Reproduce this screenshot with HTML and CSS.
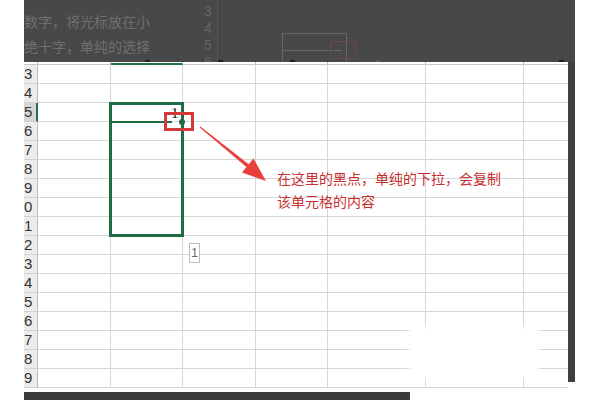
FILE: index.html
```html
<!DOCTYPE html>
<html>
<head>
<meta charset="utf-8">
<link rel="stylesheet" href="styles.css">
</head>
<body>
<div class="page">
  <div class="gutter"></div>
  <div class="main">
    <div class="ghost">
      <div class="ghost-text">数字，将光标放在小<br>绝十字，单纯的选择</div>
      <span class="gnum n3">3</span>
      <span class="gnum n4">4</span>
      <span class="gnum n5">5</span>
      <span class="gnum n6">6</span>
      <span class="gline"></span>
      <span class="grect"></span>
      <span class="grect-line"></span>
      <span class="gred"></span>
      <span class="mark m1"></span>
      <span class="mark m2"></span>
      <span class="mark m3"></span>
      <span class="mark m4"></span>
      <span class="mark m5"></span>
    </div>
    <div class="middle">
      <div class="sheet">
        <div class="hdr">
          <div class="hc"></div><div class="hc"></div><div class="hc sel"></div><div class="hc"></div><div class="hc"></div><div class="hc"></div><div class="hc"></div><div class="hc last"></div>
        </div>
        <div class="row"><div class="rh">3</div><div class="c"></div><div class="c"></div><div class="c"></div><div class="c"></div><div class="c"></div><div class="c"></div><div class="c last"></div></div>
        <div class="row"><div class="rh">4</div><div class="c"></div><div class="c"></div><div class="c"></div><div class="c"></div><div class="c"></div><div class="c"></div><div class="c last"></div></div>
        <div class="row"><div class="rh active">5</div><div class="c"></div><div class="c"></div><div class="c"></div><div class="c"></div><div class="c"></div><div class="c"></div><div class="c last"></div></div>
        <div class="row"><div class="rh">6</div><div class="c"></div><div class="c"></div><div class="c"></div><div class="c"></div><div class="c"></div><div class="c"></div><div class="c last"></div></div>
        <div class="row"><div class="rh">7</div><div class="c"></div><div class="c"></div><div class="c"></div><div class="c"></div><div class="c"></div><div class="c"></div><div class="c last"></div></div>
        <div class="row"><div class="rh">8</div><div class="c"></div><div class="c"></div><div class="c"></div><div class="c"></div><div class="c"></div><div class="c"></div><div class="c last"></div></div>
        <div class="row"><div class="rh">9</div><div class="c"></div><div class="c"></div><div class="c"></div><div class="c"></div><div class="c"></div><div class="c"></div><div class="c last"></div></div>
        <div class="row"><div class="rh">0</div><div class="c"></div><div class="c"></div><div class="c"></div><div class="c"></div><div class="c"></div><div class="c"></div><div class="c last"></div></div>
        <div class="row"><div class="rh">1</div><div class="c"></div><div class="c"></div><div class="c"></div><div class="c"></div><div class="c"></div><div class="c"></div><div class="c last"></div></div>
        <div class="row"><div class="rh">2</div><div class="c"></div><div class="c"></div><div class="c"></div><div class="c"></div><div class="c"></div><div class="c"></div><div class="c last"></div></div>
        <div class="row"><div class="rh">3</div><div class="c"></div><div class="c"></div><div class="c"></div><div class="c"></div><div class="c"></div><div class="c"></div><div class="c last"></div></div>
        <div class="row"><div class="rh">4</div><div class="c"></div><div class="c"></div><div class="c"></div><div class="c"></div><div class="c"></div><div class="c"></div><div class="c last"></div></div>
        <div class="row"><div class="rh">5</div><div class="c"></div><div class="c"></div><div class="c"></div><div class="c"></div><div class="c"></div><div class="c"></div><div class="c last"></div></div>
        <div class="row"><div class="rh">6</div><div class="c"></div><div class="c"></div><div class="c"></div><div class="c"></div><div class="c"></div><div class="c"></div><div class="c last"></div></div>
        <div class="row"><div class="rh">7</div><div class="c"></div><div class="c"></div><div class="c"></div><div class="c"></div><div class="c"></div><div class="c"></div><div class="c last"></div></div>
        <div class="row"><div class="rh">8</div><div class="c"></div><div class="c"></div><div class="c"></div><div class="c"></div><div class="c"></div><div class="c"></div><div class="c last"></div></div>
        <div class="row"><div class="rh">9</div><div class="c"></div><div class="c"></div><div class="c"></div><div class="c"></div><div class="c"></div><div class="c"></div><div class="c last"></div></div>
      </div>
      <div class="vscroll"></div>
    </div>
    <div class="hscroll"></div>
  </div>

  <div class="selection"></div>
  <div class="active-line"></div>
  <span class="cell-value">1</span>
  <div class="handle"></div>
  <div class="red-box"></div>
  <div class="tip">1</div>
  <div class="patch"></div>
  <svg class="arrow" width="600" height="400" viewBox="0 0 600 400">
    <polygon points="199.7,127.4 200.3,126.6 249,164.6 247,167.4" fill="#e8403b"/>
    <polygon points="266,181 242,172.5 253.5,158.5" fill="#e8403b"/>
  </svg>
  <div class="note">在这里的黑点，单纯的下拉，会复制<br>该单元格的内容</div>
</div>
</body>
</html>
```
FILE: styles.css
```css
* { box-sizing: border-box; }
html, body { margin: 0; padding: 0; background: #fff; }
body { width: 600px; height: 400px; overflow: hidden; font-family: "Liberation Sans", Arial, sans-serif; }

.page { position: relative; display: flex; width: 600px; height: 400px; }
.gutter { width: 24px; flex: none; }
.main { width: 551px; flex: none; display: flex; flex-direction: column; }

.ghost {
  position: relative;
  height: 62px;
  background: #484848;
  overflow: hidden;
}
.ghost-text {
  padding-top: 9px;
  font-family: "Noto Sans CJK SC", sans-serif;
  font-size: 14px;
  line-height: 25px;
  color: #6f6f6f;
  white-space: nowrap;
}
.gnum {
  position: absolute;
  left: 180px;
  font-size: 14px;
  line-height: 16px;
  color: #666;
}
.n3 { top: 3px; }
.n4 { top: 20px; }
.n5 { top: 37px; }
.n6 { top: 54px; }
.gline { position: absolute; left: 193px; top: 0; width: 1px; height: 62px; background: #575757; }
.grect { position: absolute; left: 258px; top: 33px; width: 65px; height: 32px; border: 1px solid #5e6b61; }
.grect-line { position: absolute; left: 258px; top: 50px; width: 60px; height: 1px; background: #5e6b61; }
.gred { position: absolute; left: 306px; top: 41px; width: 26px; height: 18px; border: 1px solid #6c4848; }
.mark { position: absolute; bottom: 0; width: 5px; height: 2px; background: #1e1e1e; }
.m1 { left: 121px; }
.m2 { left: 194px; }
.m3 { left: 266px; }
.m4 { left: 352px; background: #5a5a5a; }
.m5 { left: 535px; }

.middle { display: flex; height: 326px; }
.sheet { width: 544px; flex: none; display: flex; flex-direction: column; }
.vscroll { width: 7px; height: 320px; background: #3f3f3f; }
.hscroll { margin-top: 4px; width: 386px; height: 8px; background: #3c3c3c; }

.hdr, .row {
  display: grid;
  grid-template-columns: 14px 73px 72px 73px 72px 98px 98px 44px;
}
.hc { height: 3px; border-right: 1px solid #c4c4c4; border-bottom: 1px solid #c8c8c8; }
.hc.sel { border-bottom: 2px solid #217346; }
.hc.last { border-right: none; }

.row { height: 19px; }
.c { border-right: 1px solid #d6d6d6; border-bottom: 1px solid #d6d6d6; }
.c.last { border-right: none; }
.rh {
  background: #ececec;
  border-right: 1px solid #bcbcbc;
  border-bottom: 1px solid #d2d2d2;
  font-size: 15px;
  line-height: 18px;
  color: #333;
  text-align: right;
  padding-right: 5px;
  overflow: hidden;
  white-space: nowrap;
}
.rh.active { background: #d6d6d6; border-right: 2px solid #217346; padding-right: 4px; }

.selection {
  position: absolute;
  left: 109px; top: 102px;
  width: 75px; height: 135px;
  border: 3px solid #1f6b43;
}
.active-line { position: absolute; left: 112px; top: 121px; width: 60px; height: 2px; background: #1f6b43; }
.cell-value {
  position: absolute;
  left: 171px; top: 105px;
  font-family: "Liberation Serif", serif;
  font-size: 15px;
  line-height: 16px;
  color: #111;
}
.handle { position: absolute; left: 179px; top: 119px; width: 6px; height: 6px; border-radius: 50%; background: #1f6b43; }
.red-box { position: absolute; left: 164px; top: 112px; width: 30px; height: 19px; border: 3px solid #d23a3a; }
.tip {
  position: absolute;
  left: 189px; top: 243px;
  width: 11px; height: 20px;
  border: 1px solid #bcbcbc;
  background: #fff;
  font-size: 12px;
  line-height: 18px;
  text-align: center;
  color: #666;
}
.patch {
  position: absolute;
  left: 413px; top: 331px;
  width: 122px; height: 44px;
  background: #fff;
  box-shadow: 0 0 4px 4px #fff;
}
.arrow { position: absolute; left: 0; top: 0; }
.note {
  position: absolute;
  left: 277px; top: 167px;
  font-family: "Noto Sans CJK SC", sans-serif;
  font-size: 14px;
  line-height: 23px;
  color: #c8302f;
  white-space: nowrap;
}
```
